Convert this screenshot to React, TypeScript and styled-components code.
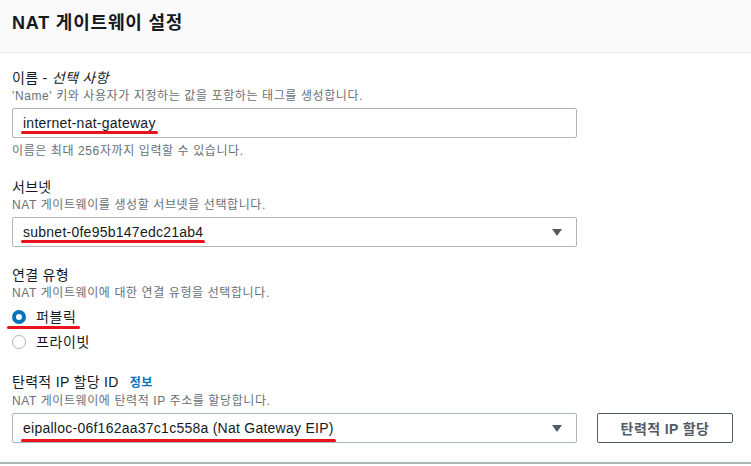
import React from "react";
import styled, { createGlobalStyle } from "styled-components";

const Global = createGlobalStyle`
  html, body { margin: 0; padding: 0; background: #ffffff; }
  body {
    font-family: "Liberation Sans", "Noto Sans CJK KR", sans-serif;
    color: #16191f;
  }
  * { box-sizing: border-box; }
`;

const Page = styled.div`
  width: 751px;
  background: #ffffff;
  border-bottom: 2px solid #aab7b8;
`;

const Header = styled.div`
  height: 53px;
  padding: 12px 12px 0;
  background: #fafafa;
  border-bottom: 1px solid #eaeded;
`;

const Title = styled.h2`
  margin: 0;
  font-size: 18px;
  line-height: 22px;
  font-weight: 700;
  letter-spacing: 0.8px;
  color: #16191f;
`;

const Body = styled.div`
  display: flex;
  flex-direction: column;
  gap: 18px;
  padding: 15px 12px 19px;
`;

const Field = styled.div`
  display: flex;
  flex-direction: column;
`;

const Label = styled.div`
  font-size: 14px;
  line-height: 20px;
  letter-spacing: 0.3px;
  color: #16191f;
  display: flex;
  align-items: baseline;
  gap: 11px;

  em { font-style: italic; }
`;

const InfoLink = styled.span`
  font-size: 12px;
  font-weight: 700;
  letter-spacing: 0.6px;
  color: #0073bb;
`;

const Desc = styled.div`
  font-size: 12px;
  line-height: 16px;
  letter-spacing: 0.6px;
  color: #687078;
`;

const Help = styled(Desc)`
  margin-top: 5px;
`;

const ControlRow = styled.div`
  margin-top: 4px;
  display: flex;
  align-items: center;
  gap: 20px;
`;

const Box = styled.div`
  width: 565px;
  height: 30px;
  border: 1px solid #aab7b8;
  border-radius: 2px;
  padding: 0 10px;
  display: flex;
  align-items: center;
  justify-content: space-between;
  font-size: 14px;
  letter-spacing: 0.25px;
  color: #16191f;
  background: #ffffff;
`;

const Caret = styled.span`
  width: 0;
  height: 0;
  margin-right: 4px;
  border-left: 5px solid transparent;
  border-right: 5px solid transparent;
  border-top: 7px solid #545b64;
`;

const Marked = styled.span<{ $drop?: number; $ext?: number; $tail?: number }>`
  position: relative;
  display: inline-flex;
  align-items: center;
  &::after {
    content: "";
    position: absolute;
    left: -${(p) => p.$ext ?? 2}px;
    right: -${(p) => p.$tail ?? 2}px;
    bottom: -${(p) => p.$drop ?? 4}px;
    height: 3px;
    border-radius: 2px;
    background: #e8131c;
  }
`;

const Button = styled.button`
  width: 136px;
  height: 30px;
  border: 1px solid #545b64;
  border-radius: 2px;
  background: #ffffff;
  color: #545b64;
  font-family: inherit;
  font-size: 14px;
  font-weight: 700;
  letter-spacing: 0.4px;
  padding: 0;
`;

const RadioList = styled.div`
  margin-top: 3px;
  display: flex;
  flex-direction: column;
`;

const RadioRow = styled.div`
  height: 25px;
  display: flex;
  align-items: center;
`;

const RadioInner = styled.span`
  display: inline-flex;
  align-items: center;
  gap: 10px;
  font-size: 14px;
  line-height: 20px;
  letter-spacing: 0.6px;
  color: #16191f;
`;

const Dot = styled.span<{ $on?: boolean }>`
  width: 14px;
  height: 14px;
  border-radius: 50%;
  background: #ffffff;
  border: ${(p) => (p.$on ? "4px solid #0073bb" : "1px solid #aab7b8")};
  flex: none;
`;

export default function App() {
  return (
    <>
      <Global />
      <Page>
        <Header>
          <Title>NAT 게이트웨이 설정</Title>
        </Header>
        <Body>
          <Field>
            <Label>
              <span>
                이름 - <em>선택 사항</em>
              </span>
            </Label>
            <Desc>'Name' 키와 사용자가 지정하는 값을 포함하는 태그를 생성합니다.</Desc>
            <ControlRow>
              <Box>
                <Marked $drop={3}>internet-nat-gateway</Marked>
              </Box>
            </ControlRow>
            <Help>이름은 최대 256자까지 입력할 수 있습니다.</Help>
          </Field>

          <Field>
            <Label>서브넷</Label>
            <Desc>NAT 게이트웨이를 생성할 서브넷을 선택합니다.</Desc>
            <ControlRow>
              <Box>
                <Marked $drop={3}>subnet-0fe95b147edc21ab4</Marked>
                <Caret />
              </Box>
            </ControlRow>
          </Field>

          <Field>
            <Label>연결 유형</Label>
            <Desc>NAT 게이트웨이에 대한 연결 유형을 선택합니다.</Desc>
            <RadioList>
              <RadioRow>
                <Marked $drop={2} $ext={5} $tail={4}>
                  <RadioInner>
                    <Dot $on />
                    퍼블릭
                  </RadioInner>
                </Marked>
              </RadioRow>
              <RadioRow>
                <RadioInner>
                  <Dot />
                  프라이빗
                </RadioInner>
              </RadioRow>
            </RadioList>
          </Field>

          <Field>
            <Label>
              <span>탄력적 IP 할당 ID</span>
              <InfoLink>정보</InfoLink>
            </Label>
            <Desc>NAT 게이트웨이에 탄력적 IP 주소를 할당합니다.</Desc>
            <ControlRow>
              <Box>
                <Marked $drop={6}>eipalloc-06f162aa37c1c558a (Nat Gateway EIP)</Marked>
                <Caret />
              </Box>
              <Button>탄력적 IP 할당</Button>
            </ControlRow>
          </Field>
        </Body>
      </Page>
    </>
  );
}
